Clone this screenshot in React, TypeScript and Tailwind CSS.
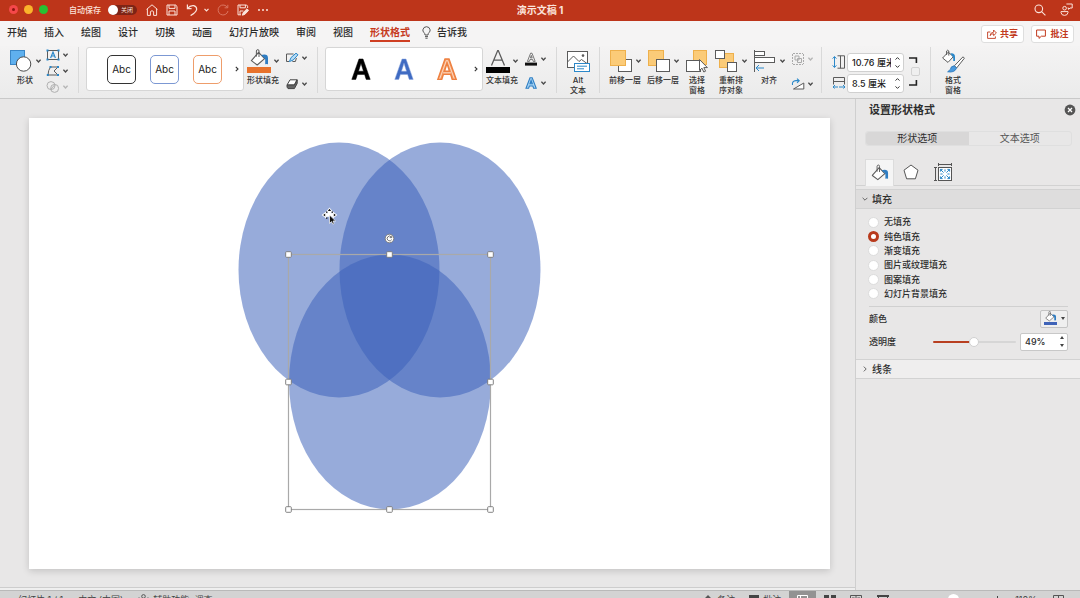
import { useState } from "react";
import type { ReactNode } from "react";

const GREY = "#5b5b5b";
const BLUE = "#2b88c9";

function Chevron({ muted = false }: { muted?: boolean }) {
  return (
    <svg width="5" height="4" viewBox="0 0 5 4" fill="none" stroke={muted ? "#b5b5b5" : "#4a4a4a"} strokeWidth="1.4" className="shrink-0">
      <path d="M0.4 0.7 L2.5 2.9 L4.6 0.7" />
    </svg>
  );
}

function Separator() {
  return <div className="h-[46px] w-px shrink-0 bg-[#d9d9d9]" />;
}

/* ---------- ribbon icons ---------- */

const ShapesIcon = () => (
  <svg width="24" height="24" viewBox="0 0 24 24">
    <rect x="1.5" y="1.5" width="14" height="14" fill="#5fb0ee" stroke="#3a86c6" strokeWidth="1" />
    <circle cx="14.6" cy="15" r="7.2" fill="#fff" stroke="#4d4d4d" strokeWidth="1" />
  </svg>
);

const TextBoxIcon = () => (
  <svg width="14" height="12" viewBox="0 0 14 12" fill="none">
    <rect x="1.5" y="1.5" width="11" height="9" stroke={GREY} />
    <path d="M4.6 9 L7 3 L9.4 9 M5.4 7 H8.6" stroke={BLUE} strokeWidth="1.2" />
    <path d="M0.5 0.5h2v2h-2zM11.5 0.5h2v2h-2zM0.5 9.5h2v2h-2zM11.5 9.5h2v2h-2z" fill={BLUE} />
  </svg>
);

const EditPointsIcon = () => (
  <svg width="14" height="12" viewBox="0 0 14 12" fill="none">
    <path d="M4.5 2 H12 L8 6 L12 10 H2 Q2.2 5 4.5 2" stroke={GREY} />
    <path d="M3.5 1h2v2h-2zM11 1h2v2h-2zM0.8 9h2v2h-2zM11 9h2v2h-2z" fill={BLUE} />
  </svg>
);

const MergeIcon = () => (
  <svg width="14" height="12" viewBox="0 0 14 12" fill="none" stroke="#b0b0b0">
    <circle cx="5" cy="4.6" r="4" />
    <circle cx="8.6" cy="7.4" r="4" />
    <path d="M5 8 L8.6 4" />
  </svg>
);

const Bucket = () => (
  <g>
    <path d="M11.6 3.4 L17.6 9.6 L10.2 16 L4.4 11.6 Z" fill="#fff" stroke={GREY} strokeWidth="1.1" strokeLinejoin="round" />
    <path d="M9.4 7.6 V2 Q9.6 0.6 10.8 0.6 Q12 0.6 12 2 V8" fill="none" stroke={GREY} strokeWidth="1" />
    <path d="M14.2 6 Q21 4.4 21 9 V15.2 Q19.6 14.6 18.2 15.2 V10.6 Q18 8.8 16.4 8.2 Z" fill="#2f7dc2" />
  </g>
);

const ShapeFillIcon = () => (
  <svg width="24" height="24" viewBox="0 0 24 24">
    <Bucket />
    <rect x="0" y="18" width="24" height="6" fill="#e8722c" />
  </svg>
);

const OutlineIcon = () => (
  <svg width="14" height="12" viewBox="0 0 14 12" fill="none">
    <path d="M8.6 2 H1.5 V9.5 H4 M11.4 6 L10.4 9.5 H7.4" stroke={GREY} />
    <path d="M4.4 9.6 L6 5.6 L11 1.2 L13 2.8 L8.2 8 Z" fill="#b7dcf6" stroke={BLUE} />
  </svg>
);

const EffectsIcon = () => (
  <svg width="14" height="12" viewBox="0 0 14 12">
    <path d="M5 1.8 H12 L9.4 7 H2 Z" fill="#fff" stroke="#444" strokeLinejoin="round" />
    <path d="M2 7 H9.4 L12.2 1.8 V5.4 L9.4 10.6 H3 Q1.6 9.4 2 7 Z" fill="#666" stroke="#444" strokeLinejoin="round" />
  </svg>
);

const TextFillIcon = () => (
  <svg width="24" height="24" viewBox="0 0 24 24" fill="none">
    <path d="M5.5 16.4 L11.7 1.6 H12.3 L18.5 16.4 M7.7 11.2 H16.3" stroke={GREY} strokeWidth="1.3" />
    <rect x="0" y="18" width="24" height="6" fill="#000" />
  </svg>
);

const TextOutlineIcon = () => (
  <svg width="14" height="14" viewBox="0 0 14 14" fill="none">
    <path d="M3.4 9.4 L6.6 1.2 H8 L11.2 9.4 H9.2 L8.6 7.4 H6 L5.4 9.4 Z M6.4 5.8 H8.2 L7.3 3.4 Z" stroke={GREY} strokeWidth="0.8" />
    <rect x="1" y="10.6" width="12" height="3" fill="#111" />
  </svg>
);

const TextEffectsIcon = () => (
  <svg width="14" height="14" viewBox="0 0 14 14">
    <path d="M2 12.2 L6 1.8 H8.2 L12.2 12.2 H9.6 L8.9 10 H5.4 L4.6 12.2 Z M6 7.8 H8.3 L7.1 4.4 Z" fill="#a9d5f5" stroke="#2f7fc4" strokeWidth="1.1" fillRule="evenodd" />
  </svg>
);

const AltTextIcon = () => (
  <svg width="24" height="24" viewBox="0 0 24 24" fill="none">
    <rect x="1.5" y="2.5" width="20" height="16" fill="#fff" stroke={GREY} />
    <path d="M1.5 13 L7.5 7 L13 12.5 L15.5 10.5 L21 14.5" stroke={GREY} />
    <circle cx="17" cy="6.6" r="1.3" fill={GREY} />
    <rect x="8.5" y="14.5" width="15" height="8" fill="#fff" stroke={BLUE} />
    <path d="M11 17.2 H21 M11 19.8 H18" stroke={BLUE} />
  </svg>
);

const BringForwardIcon = () => (
  <svg width="24" height="24" viewBox="0 0 24 24">
    <rect x="9.5" y="10.5" width="13" height="12" fill="#fff" stroke={GREY} />
    <rect x="1.5" y="1.5" width="15" height="15" fill="#fbcb78" stroke="#eeb04c" />
  </svg>
);

const SendBackIcon = () => (
  <svg width="24" height="24" viewBox="0 0 24 24">
    <rect x="1.5" y="1.5" width="15" height="15" fill="#fbcb78" stroke="#eeb04c" />
    <rect x="9.5" y="10.5" width="13" height="12" fill="#fff" stroke={GREY} />
  </svg>
);

const SelectionPaneIcon = () => (
  <svg width="24" height="24" viewBox="0 0 24 24">
    <rect x="8.5" y="1.5" width="13" height="14" fill="#fbcb78" stroke="#eeb04c" />
    <rect x="1.5" y="11.5" width="14" height="11" fill="#fff" stroke={GREY} />
    <path d="M14.5 10.5 V21.4 L17 19.2 L18.8 23 L20.6 22.2 L18.8 18.6 H22.4 Z" fill="#fff" stroke={GREY} strokeLinejoin="round" />
  </svg>
);

const ReorderIcon = () => (
  <svg width="24" height="24" viewBox="0 0 24 24">
    <rect x="4.5" y="4.5" width="14" height="14" fill="#fbcb78" stroke="#eeb04c" />
    <rect x="0.5" y="1.5" width="9" height="8" fill="#fff" stroke={GREY} />
    <rect x="12.5" y="13.5" width="9" height="9" fill="#fff" stroke={GREY} />
  </svg>
);

const AlignIcon = () => (
  <svg width="24" height="24" viewBox="0 0 24 24" fill="none">
    <path d="M1.5 1 V23" stroke={GREY} />
    <rect x="1.5" y="2.5" width="10" height="4" fill="#fff" stroke={GREY} />
    <rect x="1.5" y="8.5" width="20" height="5" fill="#fff" stroke={GREY} />
    <path d="M11 19 H3 M6 16 L3 19 L6 22" stroke={BLUE} />
  </svg>
);

const GroupIcon = () => (
  <svg width="14" height="14" viewBox="0 0 14 14" fill="none" stroke="#aaa">
    <path d="M2 1.5 H12 M2 12.5 H12 M1.5 2 V12 M12.5 2 V12" strokeDasharray="2 1" />
    <path d="M4 4 H8 V8 H4 Z M6.5 6.5 H10.5 V10.5 H6.5 Z" />
  </svg>
);

const RotateIcon = () => (
  <svg width="14" height="12" viewBox="0 0 14 12" fill="none">
    <path d="M2.5 11 L12.8 11 V5 Z" stroke={GREY} fill="#fff" />
    <path d="M1.5 7 Q0.8 3 5 2.6 H8 M6 0.6 L8.2 2.7 L6 4.8" stroke={BLUE} strokeWidth="1.1" />
  </svg>
);

const HeightIcon = () => (
  <svg width="14" height="14" viewBox="0 0 14 14" fill="none">
    <path d="M2.5 1.6 V12.4 M0.6 3.6 L2.5 1.6 L4.4 3.6 M0.6 10.4 L2.5 12.4 L4.4 10.4" stroke={BLUE} />
    <path d="M5.5 0.8 H12.5 V13.2 H5.5 M8.5 0.8 V13.2" stroke={GREY} />
  </svg>
);

const WidthIcon = () => (
  <svg width="14" height="14" viewBox="0 0 14 14" fill="none">
    <path d="M1.5 8.5 V1.5 H12.5 V8.5 M1.5 5.5 H12.5" stroke={GREY} />
    <path d="M1 11 H13 M3 9 L1 11 L3 13 M11 9 L13 11 L11 13" stroke={BLUE} strokeDasharray="5 1" />
  </svg>
);

const FormatPaneIcon = () => (
  <svg width="24" height="24" viewBox="0 0 24 24" fill="none">
    <path d="M7.2 3.2 L12.4 7.6 L7 13.4 L1.6 9 Z" fill="#fff" stroke={GREY} />
    <path d="M5.6 6 V2 Q6.6 0.4 7.8 2 V6.6" stroke={GREY} />
    <path d="M9.4 4.4 Q14 3.8 14 8 V12 H12.2 V8.4 Z" fill={BLUE} />
    <path d="M22 7.8 L13.4 16.8 L15.6 19 L23.4 9.2 Z" fill="#fff" stroke={GREY} />
    <path d="M13.4 16.8 Q9.6 17 9.4 20.4 L6.6 22.8 Q13.4 24 15.6 19.2 Z" fill="#4a9ade" stroke="#2b76b9" strokeWidth="0.8" />
  </svg>
);

/* ---------- ribbon building blocks ---------- */

function Tool({ icon, label, menu = true }: { icon: ReactNode; label: ReactNode; menu?: boolean }) {
  return (
    <button className={`flex shrink-0 flex-col whitespace-nowrap ${menu ? "w-8" : "w-6"}`}>
      <span className="flex h-7 items-center gap-[3px]">
        {icon}
        {menu && <Chevron />}
      </span>
      <span className="flex w-full justify-center text-center text-[8px] leading-[10px] font-medium text-[#333]">{label}</span>
    </button>
  );
}

function SmallTool({ icon, label, muted }: { icon: ReactNode; label: string; muted?: boolean }) {
  return (
    <button aria-label={label} className="flex items-center gap-[3px]">
      {icon}
      <Chevron muted={muted} />
    </button>
  );
}

function Pair({ children }: { children: ReactNode }) {
  return <div className="flex h-12 w-[22px] shrink-0 flex-col justify-between py-[5px]">{children}</div>;
}

function Gallery({ children }: { children: ReactNode }) {
  return (
    <div className="flex h-[44px] w-[158px] shrink-0 items-center justify-between rounded-[3px] border border-[#d6d6d6] bg-white pr-1 pl-5">
      <div className="flex gap-[14px]">{children}</div>
      <button aria-label="更多样式">
        <svg width="4" height="6" viewBox="0 0 4 6" fill="none" stroke="#333" strokeWidth="1.1">
          <path d="M0.8 0.8 L3 3 L0.8 5.2" />
        </svg>
      </button>
    </div>
  );
}

function StyleLetter({ label, fill, stroke, inner }: { label: string; fill: string; stroke: string; inner?: string }) {
  return (
    <button aria-label={label} className="flex w-[29px] justify-center">
      <svg width="24" height="26" viewBox="0 0 24 26">
        <path
          d="M2.8 23.4 L10 3 H14 L21.2 23.4 H17.2 L15.6 18.4 H8.4 L6.8 23.4 Z M9.5 15.2 H14.5 L12 7.2 Z"
          fill={fill}
          stroke={stroke}
          strokeWidth={inner ? 1.4 : 0.5}
          fillRule="evenodd"
        />
        {inner && <path d="M4.8 22.6 L11.3 4.6 H12.7 L19.2 22.6 M8.2 16.8 H15.8" fill="none" stroke={inner} strokeWidth="0.9" />}
      </svg>
    </button>
  );
}

function SizeField({ label, initial }: { label: string; initial: string }) {
  const [value, setValue] = useState(initial);
  return (
    <div className="flex h-[19px] w-[57px] items-center rounded-[3px] border border-[#d0d0d0] bg-white">
      <input
        aria-label={label}
        value={value}
        onChange={(e) => setValue(e.target.value)}
        className="h-full w-[43px] min-w-0 bg-transparent pl-1 text-[9px] font-medium text-[#222] outline-none"
      />
      <span className="flex flex-1 flex-col items-center gap-[5px]">
        <button aria-label={`增加${label}`}>
          <svg width="5" height="3" viewBox="0 0 5 3" fill="none" stroke="#333" className="block"><path d="M0.5 2.6 L2.5 0.6 L4.5 2.6" /></svg>
        </button>
        <button aria-label={`减少${label}`}>
          <svg width="5" height="3" viewBox="0 0 5 3" fill="none" stroke="#333" className="block"><path d="M0.5 0.4 L2.5 2.4 L4.5 0.4" /></svg>
        </button>
      </span>
    </div>
  );
}

/* ---------- title bar ---------- */

function TitleBar() {
  return (
    <header className="grid h-[21px] shrink-0 grid-cols-[1fr_auto_1fr] items-center bg-[#bd351a] pb-[2px] text-[#fbe3db]">
      <div className="flex items-center pl-[9px]">
        <div className="flex gap-[6px]">
          <span className="flex size-[9px] items-center justify-center rounded-full bg-[#f5484a]">
            <span className="size-[3px] rounded-full bg-[#8e1411]" />
          </span>
          <span className="size-[9px] rounded-full bg-[#fbb32b]" />
          <span className="size-[9px] rounded-full bg-[#27c232]" />
        </div>
        <span id="autosave" className="ml-[21px] text-[8px] leading-3 font-medium">自动保存</span>
        <button role="switch" aria-checked="false" aria-labelledby="autosave" className="ml-[7px] flex h-[10px] w-[29px] items-center gap-[3px] rounded-full bg-[#7d2416]">
          <span className="size-[10px] rounded-full bg-white" />
          <span className="text-[6px] leading-[10px]">关闭</span>
        </button>
        <div className="ml-[9px] flex items-center gap-2">
          <button aria-label="主页">
            <svg width="12" height="12" viewBox="0 0 12 12" fill="none" stroke="currentColor" className="block"><path d="M0.6 5.4 L6 0.8 L11.4 5.4 M1.4 4.8 V11.4 H4.4 V7.6 Q6 5.8 7.6 7.6 V11.4 H10.6 V4.8" /></svg>
          </button>
          <button aria-label="保存">
            <svg width="12" height="12" viewBox="0 0 12 12" fill="none" stroke="currentColor" className="block"><path d="M1 1 H9.6 L11 2.4 V11 H1 Z M3 1 V4.4 H9 V1 M3 11 V7 H9 V11" /></svg>
          </button>
          <button aria-label="撤消" className="flex items-center gap-[6px]">
            <svg width="12" height="12" viewBox="0 0 12 12" fill="none" stroke="currentColor" strokeWidth="1.2"><path d="M1.4 0.6 V4.6 H5.6 M1.4 4.6 Q4 1.2 7.6 1.6 Q11 2.4 10.6 5.6 Q10 8.4 4.6 11.6" /></svg>
            <svg width="5" height="4" viewBox="0 0 5 4" fill="none" stroke="currentColor" strokeWidth="1.2"><path d="M0.5 0.8 L2.5 2.9 L4.5 0.8" /></svg>
          </button>
          <button aria-label="恢复" className="text-[#da7460]">
            <svg width="12" height="12" viewBox="0 0 12 12" fill="none" stroke="currentColor" className="block"><path d="M10.8 0.8 V3.8 H7.6 M10.6 3.8 A5 5 0 1 0 11 7" /></svg>
          </button>
          <button aria-label="另存为">
            <svg width="12" height="12" viewBox="0 0 12 12" fill="none" stroke="currentColor" className="block"><path d="M10.6 4 V2.2 L9.6 1 H1 V10.8 H4 M3 1 V3.8 H8.4 V1 M3 10.6 V7 H6.4" /><path d="M5.4 11.2 L6.2 8.6 L10 4.8 L11.6 6.4 L7.8 10.4 Z" fill="currentColor" /></svg>
          </button>
          <button aria-label="更多">
            <svg width="12" height="12" viewBox="0 0 12 12" fill="currentColor" className="block"><circle cx="2" cy="6" r="1" /><circle cx="6" cy="6" r="1" /><circle cx="10" cy="6" r="1" /></svg>
          </button>
        </div>
      </div>
      <h1 className="text-[10px] leading-4 font-bold">演示文稿 1</h1>
      <div className="flex items-center justify-end gap-[14px] pr-[7px]">
        <button aria-label="搜索">
          <svg width="12" height="12" viewBox="0 0 12 12" fill="none" stroke="currentColor" strokeWidth="1.1" className="block"><circle cx="4.8" cy="4.8" r="3.8" /><path d="M7.6 7.6 L11.4 11.4" /></svg>
        </button>
        <button aria-label="联系我们">
          <svg width="13" height="13" viewBox="0 0 13 13" fill="none" stroke="currentColor" className="block"><circle cx="4.6" cy="5.2" r="1.8" /><path d="M1 8.6 H8 V9.6 Q7.6 12.4 4.5 12.4 Q1.4 12.4 1 9.6 Z M6.4 1 H12.2 V5 H10 L8.6 6.4 V5 H7.6" /></svg>
        </button>
      </div>
    </header>
  );
}

/* ---------- tabs ---------- */

const TABS = ["开始", "插入", "绘图", "设计", "切换", "动画", "幻灯片放映", "审阅", "视图", "形状格式"];

function TabBar() {
  return (
    <nav className="flex h-[25px] shrink-0 items-start justify-between bg-[#f5f4f4] pr-[6px] pl-[7px]">
      <div className="flex gap-[17px] pt-1 text-[10px] leading-[14px] font-medium text-[#2b2b2b]">
        {TABS.map((tab) =>
          tab === "形状格式" ? (
            <button key={tab} aria-current="page" className="border-b-2 border-[#cf3f22] pb-[1px] font-bold text-[#c63a1d]">{tab}</button>
          ) : (
            <button key={tab} className="self-start">{tab}</button>
          ),
        )}
        <button className="-ml-[5px] flex items-center gap-[6px] self-start">
          <svg width="9" height="13" viewBox="0 0 9 13" fill="none" stroke="#555"><path d="M3 9 Q3 7.4 1.8 6.4 Q0.6 5 0.9 3.8 Q1.4 0.8 4.5 0.7 Q7.6 0.8 8.1 3.8 Q8.4 5 7.2 6.4 Q6 7.4 6 9 Z M3 10.6 H6 M3.4 12.2 H5.6" /></svg>
          告诉我
        </button>
      </div>
      <div className="flex gap-[7px] pt-[4px] text-[9px] font-bold text-[#c23a1e]">
        <button className="flex h-[18px] w-[43px] items-center justify-center gap-[3px] rounded-[3px] border border-[#dedede] bg-white">
          <svg width="10" height="10" viewBox="0 0 10 10" fill="none" stroke="currentColor"><path d="M3.4 3 H0.6 V9.4 H8.4 V7.4 M3 6.6 Q3.4 3.4 6.6 3.2 V1 L9.4 4 L6.6 6.6 V4.8 Q4.4 4.6 3 6.6" strokeWidth="0.9" /></svg>
          共享
        </button>
        <button className="flex h-[18px] w-[43px] items-center justify-center gap-1 rounded-[3px] border border-[#dedede] bg-white">
          <svg width="10" height="10" viewBox="0 0 10 10" fill="none" stroke="currentColor"><path d="M0.6 1 H9.4 V7.2 H5.4 L3 9.4 V7.2 H0.6 Z" /></svg>
          批注
        </button>
      </div>
    </nav>
  );
}

/* ---------- ribbon ---------- */

function Ribbon() {
  return (
    <section aria-label="形状格式" className="flex h-[53px] shrink-0 items-start overflow-hidden border-b border-[#c9c9c9] bg-linear-to-b from-[#f4f3f3] to-[#ebebeb] pt-px pl-[9px]">
      <Tool icon={<ShapesIcon />} label="形状" />
      <div className="ml-[5px] flex h-12 w-[22px] shrink-0 flex-col justify-between py-[2px]">
        <SmallTool label="文本框" icon={<TextBoxIcon />} />
        <SmallTool label="编辑形状" icon={<EditPointsIcon />} />
        <SmallTool label="合并形状" icon={<MergeIcon />} muted />
      </div>
      <div className="ml-[10px] flex gap-[7px]">
        <Separator />
        <Gallery>
          <button className="size-[29px] rounded-[5px] border border-[#333] text-[10px] text-[#222]">Abc</button>
          <button className="size-[29px] rounded-[5px] border border-[#7c98d3] text-[10px] text-[#222]">Abc</button>
          <button className="size-[29px] rounded-[5px] border border-[#ee9d6b] text-[10px] text-[#222]">Abc</button>
        </Gallery>
      </div>
      <div className="ml-[3px] flex gap-[6px]">
        <Tool icon={<ShapeFillIcon />} label="形状填充" />
        <Pair>
          <SmallTool label="形状轮廓" icon={<OutlineIcon />} />
          <SmallTool label="形状效果" icon={<EffectsIcon />} />
        </Pair>
      </div>
      <div className="ml-[10px] flex gap-[7px]">
        <Separator />
        <Gallery>
          <StyleLetter label="黑色文字" fill="#000" stroke="#000" />
          <StyleLetter label="蓝色文字" fill="#3f6bc2" stroke="#8aa5dd" />
          <StyleLetter label="橙色文字" fill="#f39a63" stroke="#ee8040" inner="#fde0cc" />
        </Gallery>
      </div>
      <div className="ml-[3px] flex gap-[6px]">
        <Tool icon={<TextFillIcon />} label="文本填充" />
        <Pair>
          <SmallTool label="文本轮廓" icon={<TextOutlineIcon />} />
          <SmallTool label="文本效果" icon={<TextEffectsIcon />} />
        </Pair>
      </div>
      <div className="ml-[10px] flex gap-[9px]">
        <Separator />
        <Tool menu={false} icon={<AltTextIcon />} label={<>Alt<br />文本</>} />
        <Separator />
      </div>
      <div className="ml-[9px] flex gap-[6px]">
        <Tool icon={<BringForwardIcon />} label="前移一层" />
        <Tool icon={<SendBackIcon />} label="后移一层" />
        <Tool menu={false} icon={<SelectionPaneIcon />} label={<>选择<br />窗格</>} />
        <Tool icon={<ReorderIcon />} label={<>重新排<br />序对象</>} />
        <Tool icon={<AlignIcon />} label="对齐" />
        <Pair>
          <SmallTool label="组合" icon={<GroupIcon />} muted />
          <SmallTool label="旋转" icon={<RotateIcon />} />
        </Pair>
      </div>
      <div className="ml-2 flex gap-[10px]">
        <Separator />
        <div className="flex pt-[6px]">
          <div className="flex flex-col gap-[7px] pt-[2px] pr-px">
            <HeightIcon />
            <WidthIcon />
          </div>
          <div className="flex flex-col gap-[2px]">
            <SizeField label="高度" initial="10.76 厘米" />
            <SizeField label="宽度" initial="8.5 厘米" />
          </div>
          <div className="ml-[5px] flex flex-col gap-[3px] pt-1">
            <svg width="10" height="7" viewBox="0 0 10 7" fill="none" stroke="#222" strokeWidth="1.6"><path d="M0 1 H7.4 V6" /></svg>
            <input type="checkbox" aria-label="锁定纵横比" className="ml-[2px] size-[9px] appearance-none rounded-[2px] border border-[#d2d2d2] bg-[#efefef]" />
            <svg width="10" height="7" viewBox="0 0 10 7" fill="none" stroke="#222" strokeWidth="1.6"><path d="M0 6 H7.4 V1" /></svg>
          </div>
        </div>
        <Separator />
        <Tool menu={false} icon={<FormatPaneIcon />} label={<>格式<br />窗格</>} />
      </div>
    </section>
  );
}

/* ---------- slide canvas ---------- */

const HANDLES = [
  [259.5, 136.5], [360.5, 136.5], [461.5, 136.5],
  [259.5, 264], [461.5, 264],
  [259.5, 391.5], [360.5, 391.5], [461.5, 391.5],
];

function Slide() {
  return (
    <main className="min-w-0 flex-1 bg-[#e8e7e7] pt-[19px] pr-[25px] pb-[18px] pl-[29px]">
      <div className="h-full bg-white shadow-[0_2px_7px_rgba(0,0,0,0.16)]">
        <svg viewBox="0 0 801 451" preserveAspectRatio="xMidYMid meet" className="block h-full w-full">
          <g fill="#3b60b9" fillOpacity="0.53">
            <ellipse cx="310" cy="152" rx="100.5" ry="127.5" />
            <ellipse cx="411" cy="152" rx="100.5" ry="127.5" />
            <ellipse cx="361" cy="264" rx="101" ry="127.5" />
          </g>
          <rect x="259.5" y="136.5" width="202" height="255" fill="none" stroke="#a9a9a9" strokeWidth="1.2" />
          {HANDLES.map(([x, y]) => (
            <rect key={`${x}-${y}`} x={x - 2.8} y={y - 2.8} width="5.6" height="5.6" rx="0.8" fill="#fff" stroke="#777" strokeWidth="0.9" />
          ))}
          <circle cx="360.5" cy="120.5" r="4.3" fill="#fff" stroke="#777" strokeWidth="0.9" />
          <path d="M362.3 118.8 A2.4 2.4 0 1 0 362.7 121.6 M362.8 117.6 V119.6 H360.7" fill="none" stroke="#666" strokeWidth="0.9" />
          <g>
            <path d="M300.5 90.6 L303 93.6 H301.6 V96 H304.2 V94.6 L307.2 97 L304.2 99.4 V98 H296.8 V99.4 L293.8 97 L296.8 94.6 V96 H299.4 V93.6 H298 Z" fill="#fff" stroke="#fff" strokeWidth="1.4" />
            <path d="M300.5 90.8 L302.2 93 H298.8 Z M294.2 97 L296.2 95.6 V98.4 Z M306.8 97 L304.8 95.6 V98.4 Z M297 93.4 h1.4 v1.4 h-1.4 Z M302.6 93.4 h1.4 v1.4 h-1.4 Z M297 99.4 h1.4 v1.4 h-1.4 Z" fill="#111" />
            <path d="M300.5 97 V105.4 L302.5 103.6 L303.8 106.2 L305.2 105.4 L304 103 H306.6 Z" fill="#111" stroke="#fff" strokeWidth="0.7" />
          </g>
        </svg>
      </div>
    </main>
  );
}

/* ---------- format pane ---------- */

const FILLS = ["无填充", "纯色填充", "渐变填充", "图片或纹理填充", "图案填充", "幻灯片背景填充"];

function FormatPane() {
  const [fill, setFill] = useState("纯色填充");
  const [transparency, setTransparency] = useState(49);
  return (
    <aside className="w-[225px] shrink-0 border-l border-[#cfcfcf] bg-[#e8e7e7] text-[9px] font-medium text-[#2e2e2e]">
      <div className="flex h-[22px] items-center justify-between pr-1 pl-[13px]">
        <h2 className="text-[11px] leading-4 font-bold">设置形状格式</h2>
        <button aria-label="关闭">
          <svg width="12" height="12" viewBox="0 0 12 12" className="block"><circle cx="6" cy="6" r="5.4" fill="#555" /><path d="M4 4 L8 8 M8 4 L4 8" stroke="#fff" strokeWidth="1.3" /></svg>
        </button>
      </div>
      <div role="tablist" className="mt-[10px] mr-2 ml-[9px] grid h-[15px] grid-cols-2 rounded-[3px] border border-[#dfdfdf] text-[10px] leading-[13px] font-normal">
        <button role="tab" aria-selected="true" className="rounded-l-[3px] bg-[#d8d7d7]">形状选项</button>
        <button role="tab" aria-selected="false" className="text-[#555]">文本选项</button>
      </div>
      <div className="mt-[13px] flex h-[27px] border-b border-[#d2d2d2] pl-[9px]">
        <button aria-label="填充与线条" className="-mb-px flex w-[29px] items-center justify-center border border-b-0 border-[#dcdcdc] bg-[#f5f5f5]">
          <svg width="18" height="18" viewBox="3 0 19 18"><Bucket /></svg>
        </button>
        <button aria-label="效果" className="flex w-[33px] items-center justify-center">
          <svg width="16" height="16" viewBox="0 0 16 16"><path d="M8 1 L15 6.2 L12.4 14.8 H3.6 L1 6.2 Z" fill="#fff" stroke="#555" /></svg>
        </button>
        <button aria-label="大小与属性" className="flex w-[31px] items-center justify-center">
          <svg width="18" height="18" viewBox="0 0 18 18" fill="none">
            <path d="M4.5 0 V3 M17.5 0 V3 M4.5 1.5 H17.5 M0 4.5 H3 M0 17.5 H3 M1.5 4.5 V17.5" stroke="#555" />
            <rect x="4.5" y="4.5" width="13" height="13" fill="#fff" stroke="#555" />
            <path d="M6.4 6.4 L9.6 9.6 M15.6 6.4 L12.4 9.6 M6.4 15.6 L9.6 12.4 M15.6 15.6 L12.4 12.4 M6.4 8.6 V6.4 H8.6 M13.4 6.4 H15.6 V8.6 M6.4 13.4 V15.6 H8.6 M13.4 15.6 H15.6 V13.4 M11 6.4 V8.6 M11 13.4 V15.6 M6.4 11 H8.6 M13.4 11 H15.6" stroke={BLUE} />
          </svg>
        </button>
      </div>
      <button className="mt-[3px] flex h-5 w-full items-center gap-1 border-y border-[#d2d2d2] bg-[#dedddd] pl-[6px] text-[10px]">
        <svg width="6" height="6" viewBox="0 0 6 6" fill="none" stroke="#666"><path d="M0.6 1.8 L3 4.2 L5.4 1.8" /></svg>
        填充
      </button>
      <fieldset className="mt-[6px] grid h-[86px] grid-rows-6 pl-3" aria-label="填充">
        {FILLS.map((name) => (
          <label key={name} className="flex items-center gap-[5px]">
            <input
              type="radio"
              name="fill"
              checked={fill === name}
              onChange={() => setFill(name)}
              className="size-[11px] appearance-none rounded-full border border-[#dcdcdc] bg-white checked:border-[3px] checked:border-[#b83a1c]"
            />
            {name}
          </label>
        ))}
      </fieldset>
      <div className="mt-[5px] mr-3 ml-[13px] border-t border-[#d0d0d0] pt-[2px]">
        <div className="flex h-[19px] items-center justify-between">
          <span>颜色</span>
          <button aria-label="颜色" className="flex h-[18px] w-7 items-center justify-center gap-[3px] rounded-[2px] border border-[#c4c4c4] bg-[#efefef]">
            <svg width="15" height="15" viewBox="0 0 15 15">
              <g transform="translate(0 0) scale(0.62)"><Bucket /></g>
              <rect x="1" y="11" width="13" height="3" fill="#3f63b8" />
            </svg>
            <svg width="4" height="3" viewBox="0 0 4 3"><path d="M0 0 H4 L2 3 Z" fill="#444" /></svg>
          </button>
        </div>
        <div className="mt-1 flex h-[19px] items-center">
          <label htmlFor="transparency" className="flex-1">透明度</label>
          <input
            id="transparency"
            type="range"
            min={0}
            max={100}
            value={transparency}
            onChange={(e) => setTransparency(Number(e.target.value))}
            style={{ backgroundImage: `linear-gradient(to right, #b83f20 ${transparency}%, #d6d6d6 ${transparency}%)` }}
            className="mr-1 h-[2px] w-[83px] appearance-none rounded-full [&::-webkit-slider-thumb]:size-[10px] [&::-webkit-slider-thumb]:appearance-none [&::-webkit-slider-thumb]:rounded-full [&::-webkit-slider-thumb]:border [&::-webkit-slider-thumb]:border-[#d0d0d0] [&::-webkit-slider-thumb]:bg-white"
          />
          <div className="flex h-[18px] w-12 items-center rounded-[2px] border border-[#c8c8c8] bg-white">
            <input
              aria-label="透明度百分比"
              value={`${transparency}%`}
              onChange={(e) => setTransparency(Math.min(100, Number.parseInt(e.target.value, 10) || 0))}
              className="w-9 min-w-0 bg-transparent pl-1 text-[9px] outline-none"
            />
            <span className="flex flex-1 flex-col items-center gap-[5px]">
              <button aria-label="增加透明度" onClick={() => setTransparency(Math.min(100, transparency + 1))}>
                <svg width="4" height="3" viewBox="0 0 4 3" className="block"><path d="M0 3 H4 L2 0 Z" fill="#444" /></svg>
              </button>
              <button aria-label="减少透明度" onClick={() => setTransparency(Math.max(0, transparency - 1))}>
                <svg width="4" height="3" viewBox="0 0 4 3" className="block"><path d="M0 0 H4 L2 3 Z" fill="#444" /></svg>
              </button>
            </span>
          </div>
        </div>
      </div>
      <button className="mt-2 flex h-5 w-full items-center gap-1 border-y border-[#d2d2d2] bg-[#efeeee] pl-[6px] text-[10px]">
        <svg width="6" height="6" viewBox="0 0 6 6" fill="none" stroke="#666"><path d="M1.8 0.6 L4.2 3 L1.8 5.4" /></svg>
        线条
      </button>
    </aside>
  );
}

/* ---------- status bar ---------- */

function StatusBar() {
  return (
    <footer className="h-2 shrink-0 overflow-hidden border-t border-[#b9b9b9] bg-[#d3d3d3] text-[9px] leading-[18px] whitespace-nowrap text-[#444]">
      <div className="flex h-[17px] items-center justify-between pr-4 pl-[18px]">
        <div className="flex gap-[15px]">
          <span>幻灯片 1 / 1</span>
          <span>中文 (中国)</span>
          <button className="flex items-center gap-1">
            <svg width="11" height="12" viewBox="0 0 11 12" fill="none" stroke="#555"><circle cx="5.5" cy="2.4" r="1.8" /><path d="M1 3.4 Q0.6 5 3.6 5.4 V11 M10 3.4 Q10.4 5 7.4 5.4 V11" /></svg>
            辅助功能: 调查
          </button>
        </div>
        <div className="flex items-center">
          <button className="flex items-center gap-1">
            <svg width="10" height="10" viewBox="0 0 10 10" fill="#555"><path d="M5 0 L9 4 H1 Z M1 6 H9 V7 H1 Z" /></svg>
            备注
          </button>
          <button className="ml-[14px] flex items-center gap-1">
            <svg width="10" height="9" viewBox="0 0 10 9" fill="#444"><path d="M0 0 H10 V6.5 H5 L3 9 V6.5 H0 Z" /></svg>
            批注
          </button>
          <button aria-label="普通视图" className="ml-2 flex h-[18px] w-[27px] items-center justify-center bg-[#929292]">
            <svg width="11" height="9" viewBox="0 0 11 9" fill="none" stroke="#fff"><path d="M0.5 0.5 H10.5 V8.5 H0.5 Z M3.5 0.5 V8.5 M3.5 5.5 H10.5" /></svg>
          </button>
          <button aria-label="幻灯片浏览" className="ml-2">
            <svg width="12" height="9" viewBox="0 0 12 9" fill="#444" className="block"><path d="M0 0 H5 V4 H0 Z M7 0 H12 V4 H7 Z M0 5 H5 V9 H0 Z M7 5 H12 V9 H7 Z" /></svg>
          </button>
          <button aria-label="阅读视图" className="ml-[14px]">
            <svg width="12" height="9" viewBox="0 0 12 9" fill="none" stroke="#555" className="block"><path d="M0.5 0.5 H11.5 V8.5 H0.5 Z M6 0.5 V8.5 M2 3 H4.6 M7.4 3 H10" /></svg>
          </button>
          <button aria-label="幻灯片放映" className="ml-[15px]">
            <svg width="12" height="10" viewBox="0 0 12 10" fill="none" stroke="#444" className="block"><path d="M0 1 H12" strokeWidth="2" /><path d="M1.5 1 V6.5 H10.5 V1 M6 6.5 V9.5" /></svg>
          </button>
          <input
            type="range"
            aria-label="缩放"
            defaultValue={50}
            className="ml-[26px] h-px w-[76px] appearance-none bg-[#999] [&::-webkit-slider-thumb]:size-[11px] [&::-webkit-slider-thumb]:appearance-none [&::-webkit-slider-thumb]:rounded-full [&::-webkit-slider-thumb]:bg-white"
          />
          <button aria-label="放大" className="ml-[3px]">
            <svg width="7" height="7" viewBox="0 0 7 7" stroke="#444" className="block"><path d="M3.5 0 V7 M0 3.5 H7" /></svg>
          </button>
          <span className="ml-[14px]">110%</span>
          <button aria-label="适应窗口" className="ml-[16px]">
            <svg width="11" height="9" viewBox="0 0 11 9" fill="none" stroke="#555" className="block"><path d="M0.5 0.5 H10.5 V8.5 H0.5 Z M5.5 0.5 V8.5" /></svg>
          </button>
        </div>
      </div>
    </footer>
  );
}

export default function App() {
  return (
    <div className="flex h-screen flex-col overflow-hidden bg-[#e8e7e7] font-['Inter','Noto_Sans_CJK_SC',sans-serif]">
      <TitleBar />
      <TabBar />
      <Ribbon />
      <div className="flex min-h-0 flex-1">
        <div className="flex min-w-0 flex-1 flex-col">
          <Slide />
          <div className="h-[3px] shrink-0 border-t border-[#cdcdcd] bg-[#efefef]" />
        </div>
        <FormatPane />
      </div>
      <StatusBar />
    </div>
  );
}
